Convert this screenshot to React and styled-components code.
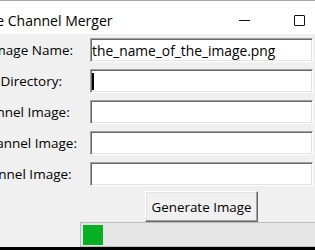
import React from "react";
import styled, { createGlobalStyle } from "styled-components";

const GlobalStyle = createGlobalStyle`
  html, body {
    margin: 0;
    padding: 0;
    background: #000;
  }
  body {
    font-family: "Open Sans", "Noto Sans", sans-serif;
  }
`;

const Viewport = styled.div`
  width: 315px;
  height: 250px;
  overflow: hidden;
  background: #000;
`;

const Window = styled.div`
  margin-left: -80px;
  width: 462px;
  height: 247px;
  overflow: hidden;
  background: #f0f0f0;
  border-top: 1px solid #a8a8a8;
  box-sizing: border-box;
  display: flex;
  flex-direction: column;
  & > * {
    flex-shrink: 0;
  }
`;

const TitleBar = styled.div`
  height: 33px;
  background: #fff;
  display: flex;
  align-items: center;
  padding-left: 44px;
`;

const Title = styled.span`
  flex: 1;
  font-size: 14px;
  color: #000;
  padding-top: 6px;
`;

const CaptionButton = styled.div`
  width: 55px;
  height: 100%;
  display: flex;
  align-items: center;
  justify-content: center;
`;

const MinGlyph = styled.span`
  width: 11px;
  height: 1px;
  margin-top: 6px;
  background: #111;
`;

const MaxGlyph = styled.span`
  width: 9px;
  height: 9px;
  margin-top: 5px;
  border: 1px solid #111;
  border-radius: 1px;
`;

const Columns = styled.div`
  display: grid;
  grid-template-columns: 1fr auto 13px 223px 69px;
`;

const Form = styled(Columns)`
  row-gap: 7px;
  padding-top: 4px;
`;

const Label = styled.span`
  grid-column: 2;
  justify-self: center;
  align-self: center;
  font-size: 13.5px;
  color: #000;
  white-space: nowrap;
`;

const Entry = styled.div`
  grid-column: 4;
  height: 24px;
  box-sizing: border-box;
  background: #fff;
  border-style: solid;
  border-width: 1px;
  border-color: #a0a0a0 #fff #fff #a0a0a0;
  box-shadow: inset 1px 1px 0 #696969, inset -1px -1px 0 #e3e3e3;
  display: flex;
  align-items: center;
  padding-left: 1px;
  font-size: 13.8px;
  color: #000;
  white-space: nowrap;
  overflow: hidden;
`;

const Caret = styled.span`
  width: 2px;
  height: 17px;
  background: #000;
`;

const Actions = styled(Columns)`
  padding-top: ${(p) => p.$gap || 0}px;
`;

const Button = styled.button`
  grid-column: 4;
  justify-self: center;
  width: 113px;
  height: 31px;
  box-sizing: border-box;
  background: #f0f0f0;
  border-style: solid;
  border-width: 1px;
  border-color: #fff #696969 #696969 #fff;
  box-shadow: inset -1px -1px 0 #a0a0a0, inset 1px 1px 0 #e3e3e3;
  font-family: inherit;
  font-size: 13.4px;
  color: #000;
  padding: 0;
`;

const Progress = styled.div`
  grid-column: 4 / 6;
  margin-left: -10px;
  height: 25px;
  box-sizing: border-box;
  border: 1px solid #bcbcbc;
  background: #e6e6e6;
  padding: 2px;
  display: flex;
`;

const Chunk = styled.div`
  width: 20px;
  height: 20px;
  background: #06b025;
`;

const fields = [
  { label: "Output Image Name:", value: "the_name_of_the_image.png" },
  { label: "Output Directory:", caret: true },
  { label: "Red Channel Image:" },
  { label: "Green Channel Image:" },
  { label: "Blue Channel Image:" },
];

export default function App() {
  return (
    <Viewport>
      <GlobalStyle />
      <Window>
        <TitleBar>
          <Title>Image Channel Merger</Title>
          <CaptionButton>
            <MinGlyph />
          </CaptionButton>
          <CaptionButton>
            <MaxGlyph />
          </CaptionButton>
          <CaptionButton />
        </TitleBar>
        <Form>
          {fields.map((f) => (
            <React.Fragment key={f.label}>
              <Label>{f.label}</Label>
              <Entry>
                {f.caret && <Caret />}
                {f.value}
              </Entry>
            </React.Fragment>
          ))}
        </Form>
        <Actions $gap={5}>
          <Button>Generate Image</Button>
        </Actions>
        <Actions>
          <Progress>
            <Chunk />
          </Progress>
        </Actions>
      </Window>
    </Viewport>
  );
}
